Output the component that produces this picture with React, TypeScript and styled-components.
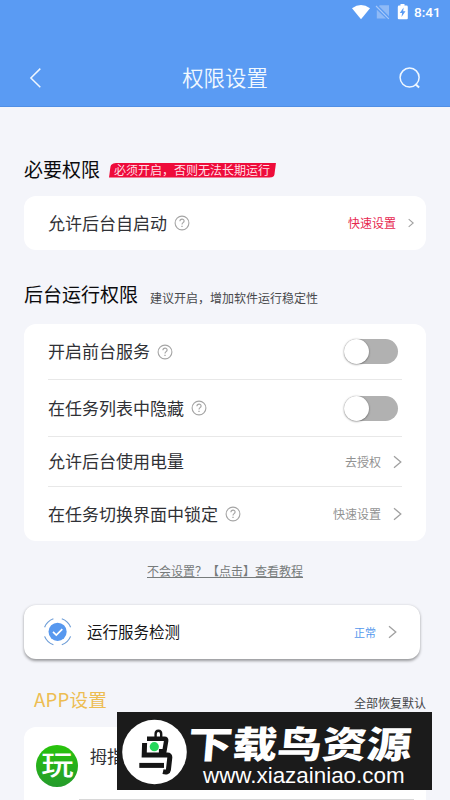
import React from "react";
import styled, { createGlobalStyle } from "styled-components";

const GlobalStyle = createGlobalStyle`
  * { box-sizing: border-box; }
  html, body { margin: 0; padding: 0; overflow: hidden; }
  body { font-family: "Noto Sans CJK SC", "Noto Sans", sans-serif; color: #303136; }
`;

const Screen = styled.div`
  position: relative;
  width: 450px;
  height: 800px;
  overflow: hidden;
  background: #f4f5fa;
`;

const Header = styled.header`
  height: 107px;
  background: #5a9bf3;
  border-bottom: 1px solid #508fe5;
  color: #fff;
`;

const StatusBar = styled.div`
  display: flex;
  justify-content: flex-end;
  height: 26px;
  padding-right: 9px;
`;

const Clock = styled.span`
  width: 27px;
  margin-left: 6px;
  font: 500 13.6px/25px Roboto, sans-serif;
  white-space: nowrap;
`;

const NavBar = styled.nav`
  display: grid;
  grid-template-columns: 24px 1fr 24px;
  align-items: center;
  height: 50px;
  margin-top: 27px;
  padding: 0 28px 0 24px;
`;

const PageTitle = styled.h1`
  margin: 0 0 2px;
  padding-left: 4px;
  text-align: center;
  font-size: 21.4px;
  font-weight: 350;
  line-height: 30px;
  color: #f2f9ff;
`;

const Content = styled.main`
  padding: 0 24px;
`;

const SectionHead = styled.div<{ $top: number; $gap: number }>`
  display: flex;
  align-items: center;
  gap: ${(p) => p.$gap}px;
  height: 28px;
  margin-top: ${(p) => p.$top}px;
`;

const SectionTitle = styled.h2`
  margin: 0 0 2px;
  font-size: 19px;
  font-weight: 400;
  line-height: 28px;
  color: #0b0b0d;
  white-space: nowrap;
`;

const Badge = styled.span`
  width: 167px;
  height: 15px;
  padding-left: 5px;
  border-radius: 7px 0 7px 0;
  clip-path: polygon(2px 0, 100% 0, 165px 100%, 0 100%);
  background: #ee0c3a;
  color: #ffdfe5;
  font-size: 12px;
  line-height: 13px;
  white-space: nowrap;
`;

const Hint = styled.span`
  padding-top: 5px;
  font-size: 12px;
  line-height: 18px;
  color: #48494c;
  white-space: nowrap;
`;

const Card = styled.section<{ $top: number; $right?: number }>`
  margin-top: ${(p) => p.$top}px;
  padding: 0 ${(p) => p.$right ?? 24}px 0 24px;
  border-radius: 12px;
  background: #fff;
`;

const Row = styled.div<{ $height: number; $line?: boolean }>`
  display: flex;
  align-items: center;
  height: ${(p) => p.$height}px;
  border-bottom: ${(p) => (p.$line ? "1px solid #e8e8e8" : "0")};
`;

const RowLabel = styled.span`
  margin-bottom: 1px;
  font-size: 17px;
  line-height: 24px;
  color: #303136;
  white-space: nowrap;
`;

const HelpIcon = styled.svg`
  width: 16px;
  height: 16px;
  margin-left: 7px;
`;

const Action = styled.span<{ $tone: string; $gap: number; $size?: number }>`
  display: flex;
  align-items: center;
  gap: ${(p) => p.$gap}px;
  margin-left: auto;
  font-size: ${(p) => p.$size ?? 12}px;
  line-height: 18px;
  color: ${(p) => p.$tone};
`;

const Switch = styled.span`
  display: flex;
  align-items: center;
  width: 54px;
  height: 25px;
  margin: 0 4px 0 auto;
  border-radius: 13px;
  background: #b1b1b1;
`;

const Knob = styled.span`
  width: 25px;
  height: 25px;
  border-radius: 50%;
  background: #fff;
  box-shadow: 0 0.5px 2px rgba(0, 0, 0, 0.5);
`;

const TutorialLink = styled.a`
  display: block;
  width: 156px;
  margin: 21px 0 0 123px;
  font-size: 12px;
  line-height: 18px;
  color: #777b7b;
  text-decoration: underline;
  text-underline-offset: 1px;
  white-space: nowrap;
`;

const ServiceCard = styled.section`
  display: flex;
  align-items: center;
  width: 396px;
  height: 54px;
  margin-top: 25px;
  padding: 0 23px 0 19px;
  border-radius: 12px;
  background: #fff;
  box-shadow: 0 1.5px 3px rgba(0, 0, 0, 0.38);
`;

const ServiceLabel = styled.span`
  margin: 0 0 2px 15px;
  font-size: 15.5px;
  line-height: 22px;
  color: #151517;
`;

const AppHead = styled.div`
  display: flex;
  justify-content: space-between;
  height: 28px;
  margin-top: 26px;
  padding-left: 10px;
`;

const AppTitle = styled.h2`
  margin: 0;
  font-size: 18.6px;
  font-weight: 400;
  line-height: 28px;
  letter-spacing: 0.2px;
  color: #edbd52;
`;

const Restore = styled.span`
  padding-top: 9px;
  font-size: 12px;
  line-height: 18px;
  color: #444548;
`;

const AppCard = styled.section`
  display: flex;
  gap: 12px;
  height: 90px;
  margin-top: 14px;
  padding: 0 12px;
  border-radius: 12px;
  background: #fff;
`;

const AppIcon = styled.div`
  display: flex;
  justify-content: center;
  width: 42px;
  height: 42px;
  margin-top: 18px;
  border-radius: 50%;
  background: linear-gradient(#28c40b, #259b2c);
  color: #fff;
`;

const AppGlyph = styled.span`
  font-size: 27px;
  font-weight: 500;
  line-height: 38px;
  transform: scaleX(1.2);
`;

const AppBody = styled.div`
  flex: 1;
  height: 73px;
  margin-left: -11px;
  padding: 17px 0 0 11px;
  border-bottom: 1px solid #d8d8d8;
  font-size: 17px;
  line-height: 24px;
`;

const Watermark = styled.aside`
  position: absolute;
  left: 117px;
  top: 712px;
  display: flex;
  width: 315px;
  height: 78px;
  padding-left: 5px;
  background: #1b1b1b;
  color: #fff;
`;

const WatermarkText = styled.div`
  margin-left: 1px;
  padding-top: 9px;
`;

const WatermarkName = styled.div`
  width: 190px;
  height: 42px;
  font-size: 37px;
  font-weight: 900;
  line-height: 42px;
  white-space: nowrap;
  transform-origin: 0 50%;
  transform: scaleX(1.21) skewX(-4deg);
`;

const WatermarkUrl = styled.div`
  width: 210px;
  margin-left: 15px;
  font: 22.4px/25px "Liberation Sans", sans-serif;
  white-space: nowrap;
`;

const Help = () => (
  <HelpIcon viewBox="0 0 16 16" fill="none" stroke="#a5a5a5">
    <circle cx="8" cy="8" r="6.9" strokeWidth="1.1" />
    <path d="M5.9 6.2C6 3.3 10.2 3.5 10.1 6.1C10 7.6 8 7.7 8 9.4" strokeWidth="1.1" />
    <path d="M8 10.7v1.3" strokeWidth="1.3" />
  </HelpIcon>
);

const Chevron = ({ small = false }: { small?: boolean }) => (
  <svg width={small ? 6 : 9} height={small ? 10 : 14} viewBox="0 0 9 14" fill="none" stroke="#a0a0a0">
    <path d="M1 1.2L7.8 7L1 12.8" strokeWidth={small ? 1.6 : 1.3} />
  </svg>
);

const StatusIcons = () => (
  <svg width="57" height="26" viewBox="351 0 57 26">
    <path d="M352 8.3Q361 1.6 370 8.3L361 19.2Z" fill="#fff" />
    <path d="M378.8 6L389 16.2V5.2H380ZM376.8 9.8V18.4H386Z" fill="#8fbaf6" />
    <path d="M376 6L388.8 18.8" stroke="#a9c9f8" strokeWidth="1.1" />
    <path d="M400.5 4h4v1.6h2a1.3 1.3 0 0 1 1.3 1.3v11.3a1 1 0 0 1-1 1h-8a1 1 0 0 1-1-1V6.9a1.3 1.3 0 0 1 1.3-1.3h1.4Z" fill="#fff" />
    <path d="M403.6 7.6L399.8 13h2.3l-.6 4l4-5.7h-2.3Z" fill="#5a9bf3" />
  </svg>
);

const ServiceIcon = () => (
  <svg width="29" height="30" viewBox="0 0 29 30" fill="none">
    <circle cx="14.6" cy="14.8" r="9.1" fill="#5798ef" />
    <path d="M10 14.9l3.3 3.2l6-6" stroke="#fff" strokeWidth="1.7" />
    <path d="M1.6 10.2Q4 4.2 10.4 1.8M18.8 1.8Q25.2 4.2 27.6 10.2M27.6 19.4Q25.2 25.4 18.8 27.8M10.4 27.8Q4 25.4 1.6 19.4" stroke="#6f9ed7" strokeWidth="1.2" />
  </svg>
);

const BirdLogo = () => (
  <svg width="65" height="78" viewBox="122 712 65 78" fill="none" stroke="#151515">
    <circle cx="154.5" cy="752" r="32.3" fill="#fff" stroke="none" />
    <path d="M155.6 738v-4q0-3.3 2.8-3.3t2.8 3.3v4" strokeWidth="2.4" />
    <path d="M147 738.7h17.5q2 0 1.7 2l-1.8 10.5h-5.5" strokeWidth="4.4" />
    <path d="M144.6 743l-.4 12h23.3q2.5 0 2.3 2.5l-1.4 12.5q-.3 2.7-5.4 1.6" strokeWidth="5" />
    <path d="M139.3 765.4H164" strokeWidth="5" />
    <circle cx="154.3" cy="746.7" r="4.6" fill="#25d75b" stroke="none" />
  </svg>
);

const permissions = [
  { label: "开启前台服务", height: 56, help: true },
  { label: "在任务列表中隐藏", height: 57, help: true },
  { label: "允许后台使用电量", height: 50, action: "去授权" },
  { label: "在任务切换界面中锁定", height: 54, help: true, action: "快速设置" },
];

export default function App() {
  return (
    <Screen>
      <GlobalStyle />
      <Header>
        <StatusBar>
          <StatusIcons />
          <Clock>8:41</Clock>
        </StatusBar>
        <NavBar>
          <svg width="24" height="24" viewBox="0 0 24 24" fill="none" stroke="#eff7ff" strokeWidth="1.5">
            <path d="M16.3 2.6L6.9 12L16.3 21.2" />
          </svg>
          <PageTitle>权限设置</PageTitle>
          <svg width="24" height="24" viewBox="0 0 24 24" fill="none" stroke="#eff7ff" strokeWidth="1.5">
            <circle cx="11.6" cy="11.6" r="9.5" />
            <path d="M17.3 18l3.8 3.6" strokeWidth="2" />
          </svg>
        </NavBar>
      </Header>
      <Content>
        <SectionHead $top={49} $gap={9}>
          <SectionTitle>必要权限</SectionTitle>
          <Badge>必须开启，否则无法长期运行</Badge>
        </SectionHead>
        <Card $top={12} $right={12}>
          <Row $height={54}>
            <RowLabel>允许后台自启动</RowLabel>
            <Help />
            <Action $tone="#e7284f" $gap={12}>
              快速设置
              <Chevron small />
            </Action>
          </Row>
        </Card>
        <SectionHead $top={31} $gap={12}>
          <SectionTitle>后台运行权限</SectionTitle>
          <Hint>建议开启，增加软件运行稳定性</Hint>
        </SectionHead>
        <Card $top={15}>
          {permissions.map((item, index) => (
            <Row key={item.label} $height={item.height} $line={index < permissions.length - 1}>
              <RowLabel>{item.label}</RowLabel>
              {item.help && <Help />}
              {item.action ? (
                <Action $tone="#929292" $gap={12}>
                  {item.action}
                  <Chevron />
                </Action>
              ) : (
                <Switch>
                  <Knob />
                </Switch>
              )}
            </Row>
          ))}
        </Card>
        <TutorialLink>不会设置？【点击】查看教程</TutorialLink>
        <ServiceCard>
          <ServiceIcon />
          <ServiceLabel>运行服务检测</ServiceLabel>
          <Action $tone="#5498ed" $gap={12} $size={11}>
            正常
            <Chevron />
          </Action>
        </ServiceCard>
        <AppHead>
          <AppTitle>APP设置</AppTitle>
          <Restore>全部恢复默认</Restore>
        </AppHead>
        <AppCard>
          <AppIcon>
            <AppGlyph>玩</AppGlyph>
          </AppIcon>
          <AppBody>拇指玩</AppBody>
        </AppCard>
      </Content>
      <Watermark>
        <BirdLogo />
        <WatermarkText>
          <WatermarkName>下载鸟资源</WatermarkName>
          <WatermarkUrl>www.xiazainiao.com</WatermarkUrl>
        </WatermarkText>
      </Watermark>
    </Screen>
  );
}
